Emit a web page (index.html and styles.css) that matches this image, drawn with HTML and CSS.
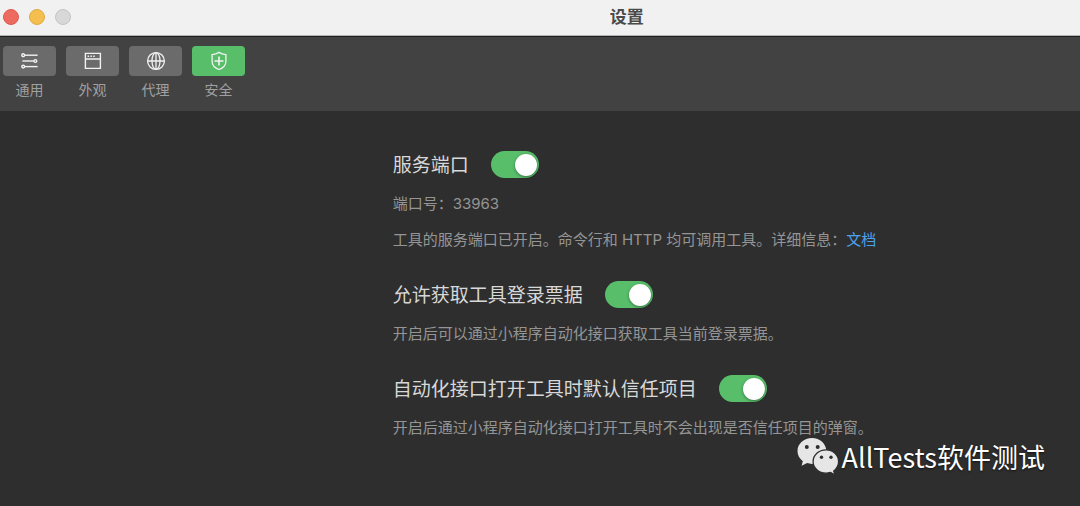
FILE: index.html
```html
<!DOCTYPE html>
<html lang="zh-CN">
<head>
    <meta charset="UTF-8">
    <meta name="viewport" content="width=device-width, initial-scale=1.0">
    <title>设置</title>
    <link rel="stylesheet" href="styles.css">
</head>
<body>

    <header class="titlebar">
        <div class="window-buttons">
            <button type="button" class="dot close" aria-label="关闭"></button>
            <button type="button" class="dot minimize" aria-label="最小化"></button>
            <button type="button" class="dot zoom" aria-label="缩放" disabled></button>
        </div>
        <h1>设置</h1>
    </header>

    <nav class="toolbar">
        <button type="button" class="tab">
            <span class="tab-icon">
                <svg width="18" height="18" viewBox="0 0 18 18" fill="none" stroke="currentColor" stroke-width="1.4">
                    <circle cx="2.2" cy="3.2" r="1.4"/>
                    <path d="M3.6 3.2h13"/>
                    <circle cx="14.4" cy="9" r="1.4"/>
                    <path d="M1.4 9H13"/>
                    <circle cx="2.2" cy="14.6" r="1.4"/>
                    <path d="M3.6 14.6h13"/>
                </svg>
            </span>
            <span class="tab-label">通用</span>
        </button>
        <button type="button" class="tab">
            <span class="tab-icon">
                <svg width="18" height="18" viewBox="0 0 18 18" fill="none" stroke="currentColor" stroke-width="1.4">
                    <path d="M1.4 1.4h15v15h-15zM1.4 7h15"/>
                    <path d="M3.6 4.3h1.5M6.4 4.3h1.5M9.2 4.3h1.5"/>
                </svg>
            </span>
            <span class="tab-label">外观</span>
        </button>
        <button type="button" class="tab">
            <span class="tab-icon">
                <svg width="20" height="20" viewBox="0 0 20 20" fill="none" stroke="currentColor" stroke-width="1.3">
                    <circle cx="10" cy="10" r="8.4"/>
                    <ellipse cx="10" cy="10" rx="4" ry="8.4"/>
                    <path d="M1.6 10h16.8M10 1.6v16.8"/>
                </svg>
            </span>
            <span class="tab-label">代理</span>
        </button>
        <button type="button" class="tab active">
            <span class="tab-icon">
                <svg width="20" height="20" viewBox="0 0 20 20" fill="none" stroke="currentColor" stroke-width="1.3">
                    <path d="M10 1.4c2 1.3 4.3 2 6.9 2.2v6.6c0 4-2.7 6.7-6.9 8.3-4.2-1.6-6.9-4.3-6.9-8.3V3.6C5.7 3.4 8 2.7 10 1.4z"/>
                    <path d="M10 5.5v9M5.500 10h9" stroke-width="1.6"/>
                </svg>
            </span>
            <span class="tab-label">安全</span>
        </button>
    </nav>

    <main class="content">
        <section class="setting">
            <div class="setting-head">
                <label for="service-port">服务端口</label>
                <input type="checkbox" class="switch" id="service-port" checked>
            </div>
            <p>端口号：33963</p>
            <p>工具的服务端口已开启。命令行和 HTTP 均可调用工具。详细信息：<a href="#">文档</a></p>
        </section>

        <section class="setting">
            <div class="setting-head">
                <label for="allow-ticket">允许获取工具登录票据</label>
                <input type="checkbox" class="switch" id="allow-ticket" checked>
            </div>
            <p>开启后可以通过小程序自动化接口获取工具当前登录票据。</p>
        </section>

        <section class="setting">
            <div class="setting-head">
                <label for="trust-project">自动化接口打开工具时默认信任项目</label>
                <input type="checkbox" class="switch" id="trust-project" checked>
            </div>
            <p>开启后通过小程序自动化接口打开工具时不会出现是否信任项目的弹窗。</p>
        </section>
    </main>

    <div class="watermark">
        <svg width="42" height="38" viewBox="0 0 42 38">
            <path fill="#e6e6e6" d="M15 0C7 0 .5 5.600.5 13c0 4 2 7.700 5.300 10.200L4.600 27.800l5.500-2.700c1.600.5 3.200.8 4.900.8 8 0 14.300-5.700 14.300-12.900S23 0 15 0z"/>
            <path fill="#e6e6e6" stroke="#2e2e2e" stroke-width="1.3" d="M29 11.800c-7.200 0-12.900 5.200-12.900 11.700S21.800 35.200 29 35.200c1.600 0 3.100-.3 4.600-.7l4.300 2.500-1.200-4.100c3-2.200 4.900-5.400 4.900-9.400 0-6.500-5.600-11.700-12.600-11.700z"/>
            <g fill="#2e2e2e">
                <circle cx="9.800" cy="9" r="2"/>
                <circle cx="20.700" cy="9" r="2"/>
                <circle cx="24.500" cy="19.200" r="1.700"/>
                <circle cx="34" cy="19.200" r="1.700"/>
            </g>
        </svg>
        <span>AllTests软件测试</span>
    </div>

</body>
</html>
```

FILE: styles.css
```css
* {
    box-sizing: border-box;
}

body {
    margin: 0;
    min-height: 100vh;
    position: relative;
    background-color: #2e2e2e;
    color: #d8d8d8;
    font-family: Inter, "Noto Sans CJK SC", sans-serif;
}

button {
    padding: 0;
    border: none;
    background: none;
    font-family: inherit;
}

/* Title bar */
.titlebar {
    display: grid;
    grid-template-columns: 7fr auto 5fr;
    align-items: center;
    height: 37px;
    padding: 0 3px 2px;
    background-color: #f1f1f1;
    border-bottom: 1px solid #202020;
    box-shadow: inset 0 -1px 0 #b4b4b4;
}

.titlebar h1 {
    margin: 0;
    font-size: 17px;
    line-height: 20px;
    font-weight: bold;
    color: #4a4a4a;
}

.window-buttons {
    display: flex;
    gap: 10px;
}

.dot {
    width: 16px;
    height: 16px;
    border-radius: 50%;
}

.dot.close {
    background-color: #ed6a5e;
    border: 1px solid #dc5b50;
}

.dot.minimize {
    background-color: #f5bf4f;
    border: 1px solid #deaa42;
}

.dot.zoom {
    background-color: #d8d8d8;
    border: 1px solid #c4c4c4;
}

/* Toolbar */
.toolbar {
    display: flex;
    gap: 10px;
    padding: 9px 3px;
    height: 74px;
    background-color: #424242;
}

.tab {
    display: flex;
    flex-direction: column;
    align-items: center;
    gap: 4px;
    width: 53px;
    color: #a0a0a0;
}

.tab-icon {
    display: flex;
    align-items: center;
    justify-content: center;
    width: 100%;
    height: 30px;
    border-radius: 4px;
    background-color: #6b6b6b;
    color: #f2f2f2;
}

.tab.active .tab-icon {
    background-color: #58be6a;
}

.tab-label {
    font-size: 14px;
    line-height: 20px;
}

/* Settings */
.content {
    display: grid;
    grid-template-columns: 4fr 7fr;
    row-gap: 31px;
    padding: 40px 0;
}

.setting {
    grid-column: 2;
}

.setting-head {
    display: flex;
    align-items: flex-start;
    gap: 22px;
    height: 27px;
    font-size: 19px;
    line-height: 30px;
}

.setting p {
    margin: 16px 0 0;
    font-size: 15px;
    line-height: 20px;
    color: #959595;
}

.setting a {
    color: #4ba3ee;
    text-decoration: none;
}

.switch {
    appearance: none;
    display: flex;
    align-items: center;
    flex: none;
    width: 48px;
    height: 27px;
    margin: 0;
    padding: 0 2px;
    border-radius: 14px;
    background-color: #6b6b6b;
}

.switch::before {
    content: "";
    width: 22px;
    height: 22px;
    border-radius: 50%;
    background-color: #fff;
    box-shadow: 0 1px 3px rgba(0, 0, 0, 0.4);
}

.switch:checked {
    justify-content: flex-end;
    background-color: #58be6a;
}

/* Watermark over the page */
.watermark {
    position: absolute;
    right: 35px;
    bottom: 30px;
    display: flex;
    align-items: center;
    gap: 3px;
    color: #fff;
    font-family: "Noto Sans CJK SC", sans-serif;
    font-size: 27px;
    line-height: 38px;
    text-shadow: 0 1px 2px #111;
}
```
